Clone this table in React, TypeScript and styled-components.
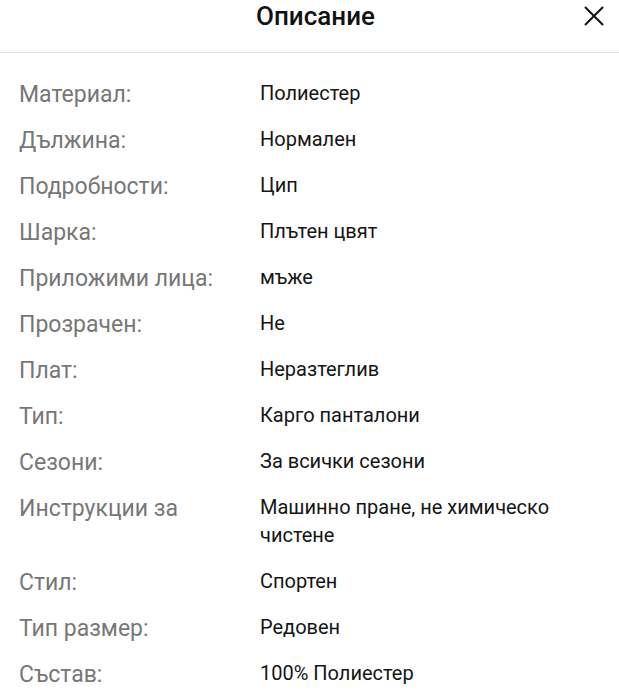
import React from "react";
import styled, { createGlobalStyle } from "styled-components";

const Global = createGlobalStyle`
  html, body { margin: 0; padding: 0; background: #fff; }
  body { font-family: Roboto, "Noto Sans", sans-serif; }
`;

const Sheet = styled.div`
  width: 619px;
  background: #fff;
`;

const Header = styled.header`
  position: relative;
  height: 53px;
  border-bottom: 1px solid #e3e3e3;
  display: flex;
  align-items: flex-start;
  justify-content: center;
  padding-left: 12px;
  box-sizing: border-box;
`;

const Title = styled.h1`
  margin: 0;
  font-size: 26px;
  line-height: 32px;
  font-weight: 500;
  color: #111;
`;

const Close = styled.button`
  position: absolute;
  right: 14px;
  top: 5px;
  width: 22px;
  height: 22px;
  padding: 0;
  border: 0;
  background: none;
  display: flex;
  align-items: center;
  justify-content: center;
`;

const List = styled.dl`
  margin: 0;
  padding: 26px 19px 0 19px;
  display: flex;
  flex-direction: column;
  gap: 18px;
`;

const Row = styled.div`
  display: grid;
  grid-template-columns: 241px 1fr;
`;

const Label = styled.dt`
  margin: 0;
  padding-top: 4px;
  font-size: 23px;
  line-height: 24px;
  color: #777;
  white-space: nowrap;
  overflow: hidden;
`;

const Value = styled.dd`
  margin: 0;
  font-size: 20px;
  line-height: 28px;
  color: #151515;
`;

const rows: [string, string][] = [
  ["Материал:", "Полиестер"],
  ["Дължина:", "Нормален"],
  ["Подробности:", "Цип"],
  ["Шарка:", "Плътен цвят"],
  ["Приложими лица:", "мъже"],
  ["Прозрачен:", "Не"],
  ["Плат:", "Неразтеглив"],
  ["Тип:", "Карго панталони"],
  ["Сезони:", "За всички сезони"],
  ["Инструкции за", "Машинно пране, не химическо чистене"],
  ["Стил:", "Спортен"],
  ["Тип размер:", "Редовен"],
  ["Състав:", "100% Полиестер"],
];

export default function App() {
  return (
    <Sheet>
      <Global />
      <Header>
        <Title>Описание</Title>
        <Close aria-label="Затвори">
          <svg width="22" height="22" viewBox="0 0 22 22">
            <path d="M2 2L20 20M20 2L2 20" stroke="#111" strokeWidth="2" fill="none" />
          </svg>
        </Close>
      </Header>
      <List>
        {rows.map(([l, v]) => (
          <Row key={l}>
            <Label>{l}</Label>
            <Value>{v}</Value>
          </Row>
        ))}
      </List>
    </Sheet>
  );
}
